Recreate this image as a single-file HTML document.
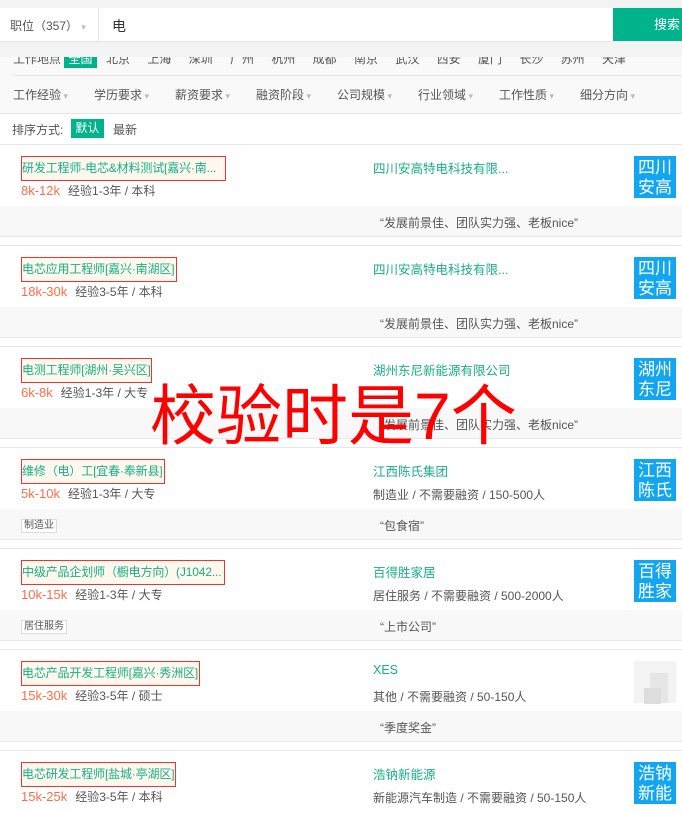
<!DOCTYPE html>
<html><head><meta charset="utf-8"><style>
*{margin:0;padding:0;box-sizing:border-box}
html,body{width:682px;height:813px;overflow:hidden}
body{background:#fff;font-family:"Liberation Sans","Noto Sans CJK SC",sans-serif;font-size:12px;color:#555;position:relative}
.a{position:absolute;white-space:nowrap}
.card{position:absolute;left:0;width:682px;height:101px;border-top:1px solid #e6e6e6}
.band{position:absolute;left:0;top:61px;width:682px;height:31px;background:#f8f8f8;border-bottom:1px solid #e8e8e8}
.tbox{position:absolute;left:21px;top:11px;height:25px;border:1px solid #e33;background:#fdf8ee;color:#1aae86;font-size:12px;letter-spacing:-0.15px;line-height:23px;white-space:nowrap;overflow:hidden}
.sal{position:absolute;left:21px;top:37px;font-size:13px;color:#fd6e48;white-space:nowrap}
.req{color:#555;font-size:12px;margin-left:8px}
.co{position:absolute;left:373px;top:13px;color:#1aae86;font-size:12.5px;white-space:nowrap}
.ind{position:absolute;left:373px;top:38px;color:#555;white-space:nowrap}
.logo{position:absolute;left:633px;top:10px;width:44px;height:44px;background:#13a6f0;color:#fff;font-size:17px;line-height:20px;text-align:center;padding-top:2px;border:1px solid #fff}
.quote{position:absolute;left:380px;top:8px;color:#555;white-space:nowrap}
.tag{position:absolute;left:21px;top:10px;border:1px solid #ddd;background:#fff;font-size:10px;padding:0 2px;line-height:12px;color:#555}
.f{position:absolute;top:86px;color:#555;font-size:12px;white-space:nowrap}
.f:after{content:" ▾";color:#bbb;font-size:9px}
</style></head><body>
<div class="a" style="left:0;top:0;width:682px;height:57px;background:#f2f3f3"></div>
<div class="a" style="left:0;top:57px;width:682px;height:56px;background:#f9f9f9"></div>
<div class="a" style="left:13px;top:50px;font-size:12px;color:#555;clip-path:inset(7px 0 0 0)">工作地点</div>
<div class="a" style="left:64px;top:50px;width:33px;height:18px;background:#00b38a;color:#fff;text-align:center;line-height:18px;clip-path:inset(7px 0 0 0)">全国</div>
<div class="a" style="left:106px;top:50px;color:#555;word-spacing:14px;clip-path:inset(7px 0 0 0)">北京 上海 深圳 广州 杭州 成都 南京 武汉 西安 厦门 长沙 苏州 天津</div>
<div class="a" style="left:0;top:8px;width:613px;height:34px;background:#fff;border-bottom:1px solid #e4e4e4"></div>
<div class="a" style="left:10px;top:17px;color:#555;font-size:12px">职位（357） <span style="color:#bbb;font-size:9px">▾</span></div>
<div class="a" style="left:98px;top:8px;width:1px;height:33px;background:#e8e8e8"></div>
<div class="a" style="left:112px;top:16px;color:#333;font-size:14px">电</div>
<div class="a" style="left:613px;top:8px;width:69px;height:33px;background:#00b38a;color:#fff;font-size:13px;line-height:33px;padding-left:41px">搜索</div>
<div class="a" style="left:13px;top:75px;width:669px;height:1px;background:#e6e6e6"></div>
<div class="f" style="left:13px">工作经验</div><div class="f" style="left:94px">学历要求</div><div class="f" style="left:175px">薪资要求</div><div class="f" style="left:256px">融资阶段</div><div class="f" style="left:337px">公司规模</div><div class="f" style="left:418px">行业领域</div><div class="f" style="left:499px">工作性质</div><div class="f" style="left:580px">细分方向</div>
<div class="a" style="left:0;top:113px;width:682px;height:1px;background:#e6e6e6"></div>
<div class="a" style="left:12px;top:121px;color:#555">排序方式:</div>
<div class="a" style="left:71px;top:119px;width:33px;height:19px;background:#00b38a;color:#fff;text-align:center;line-height:19px">默认</div>
<div class="a" style="left:113px;top:121px;color:#555">最新</div>

<div class="card" style="top:144px"><div class="tbox" style="width:205px">研发工程师-电芯&amp;材料测试[嘉兴·南...</div><div class="sal">8k-12k<span class="req">经验1-3年 / 本科</span></div><div class="co">四川安高特电科技有限...</div><div class="logo">四川<br>安高</div><div class="band"><div class="quote">“发展前景佳、团队实力强、老板nice”</div></div></div>
<div class="card" style="top:245px"><div class="tbox" style="width:156px">电芯应用工程师[嘉兴·南湖区]</div><div class="sal">18k-30k<span class="req">经验3-5年 / 本科</span></div><div class="co">四川安高特电科技有限...</div><div class="logo">四川<br>安高</div><div class="band"><div class="quote">“发展前景佳、团队实力强、老板nice”</div></div></div>
<div class="card" style="top:346px"><div class="tbox" style="width:131px">电测工程师[湖州·吴兴区]</div><div class="sal">6k-8k<span class="req">经验1-3年 / 大专</span></div><div class="co">湖州东尼新能源有限公司</div><div class="logo">湖州<br>东尼</div><div class="band"><div class="quote">“发展前景佳、团队实力强、老板nice”</div></div></div>
<div class="card" style="top:447px"><div class="tbox" style="width:144px">维修（电）工[宜春·奉新县]</div><div class="sal">5k-10k<span class="req">经验1-3年 / 大专</span></div><div class="co">江西陈氏集团</div><div class="ind">制造业 / 不需要融资 / 150-500人</div><div class="logo">江西<br>陈氏</div><div class="band"><div class="tag">制造业</div><div class="quote">“包食宿”</div></div></div>
<div class="card" style="top:548px"><div class="tbox" style="width:204px">中级产品企划师（橱电方向）(J1042...</div><div class="sal">10k-15k<span class="req">经验1-3年 / 大专</span></div><div class="co">百得胜家居</div><div class="ind">居住服务 / 不需要融资 / 500-2000人</div><div class="logo">百得<br>胜家</div><div class="band"><div class="tag">居住服务</div><div class="quote">“上市公司”</div></div></div>
<div class="card" style="top:649px"><div class="tbox" style="width:179px">电芯产品开发工程师[嘉兴·秀洲区]</div><div class="sal">15k-30k<span class="req">经验3-5年 / 硕士</span></div><div class="co">XES</div><div class="ind">其他 / 不需要融资 / 50-150人</div><div class="logo" style="background:#f3f3f3"><div style="position:absolute;left:16px;top:12px;width:18px;height:30px;background:#e6e6e6"></div><div style="position:absolute;left:10px;top:27px;width:17px;height:16px;background:#ddd"></div></div><div class="band"><div class="quote">“季度奖金”</div></div></div>
<div class="card" style="top:750px"><div class="tbox" style="width:155px">电芯研发工程师[盐城·亭湖区]</div><div class="sal">15k-25k<span class="req">经验3-5年 / 本科</span></div><div class="co">浩钠新能源</div><div class="ind">新能源汽车制造 / 不需要融资 / 50-150人</div><div class="logo">浩钠<br>新能</div></div>

<div class="a" style="left:150px;top:376px;color:#f00;font-size:66px;line-height:80px">校验时是7个</div>
</body></html>
